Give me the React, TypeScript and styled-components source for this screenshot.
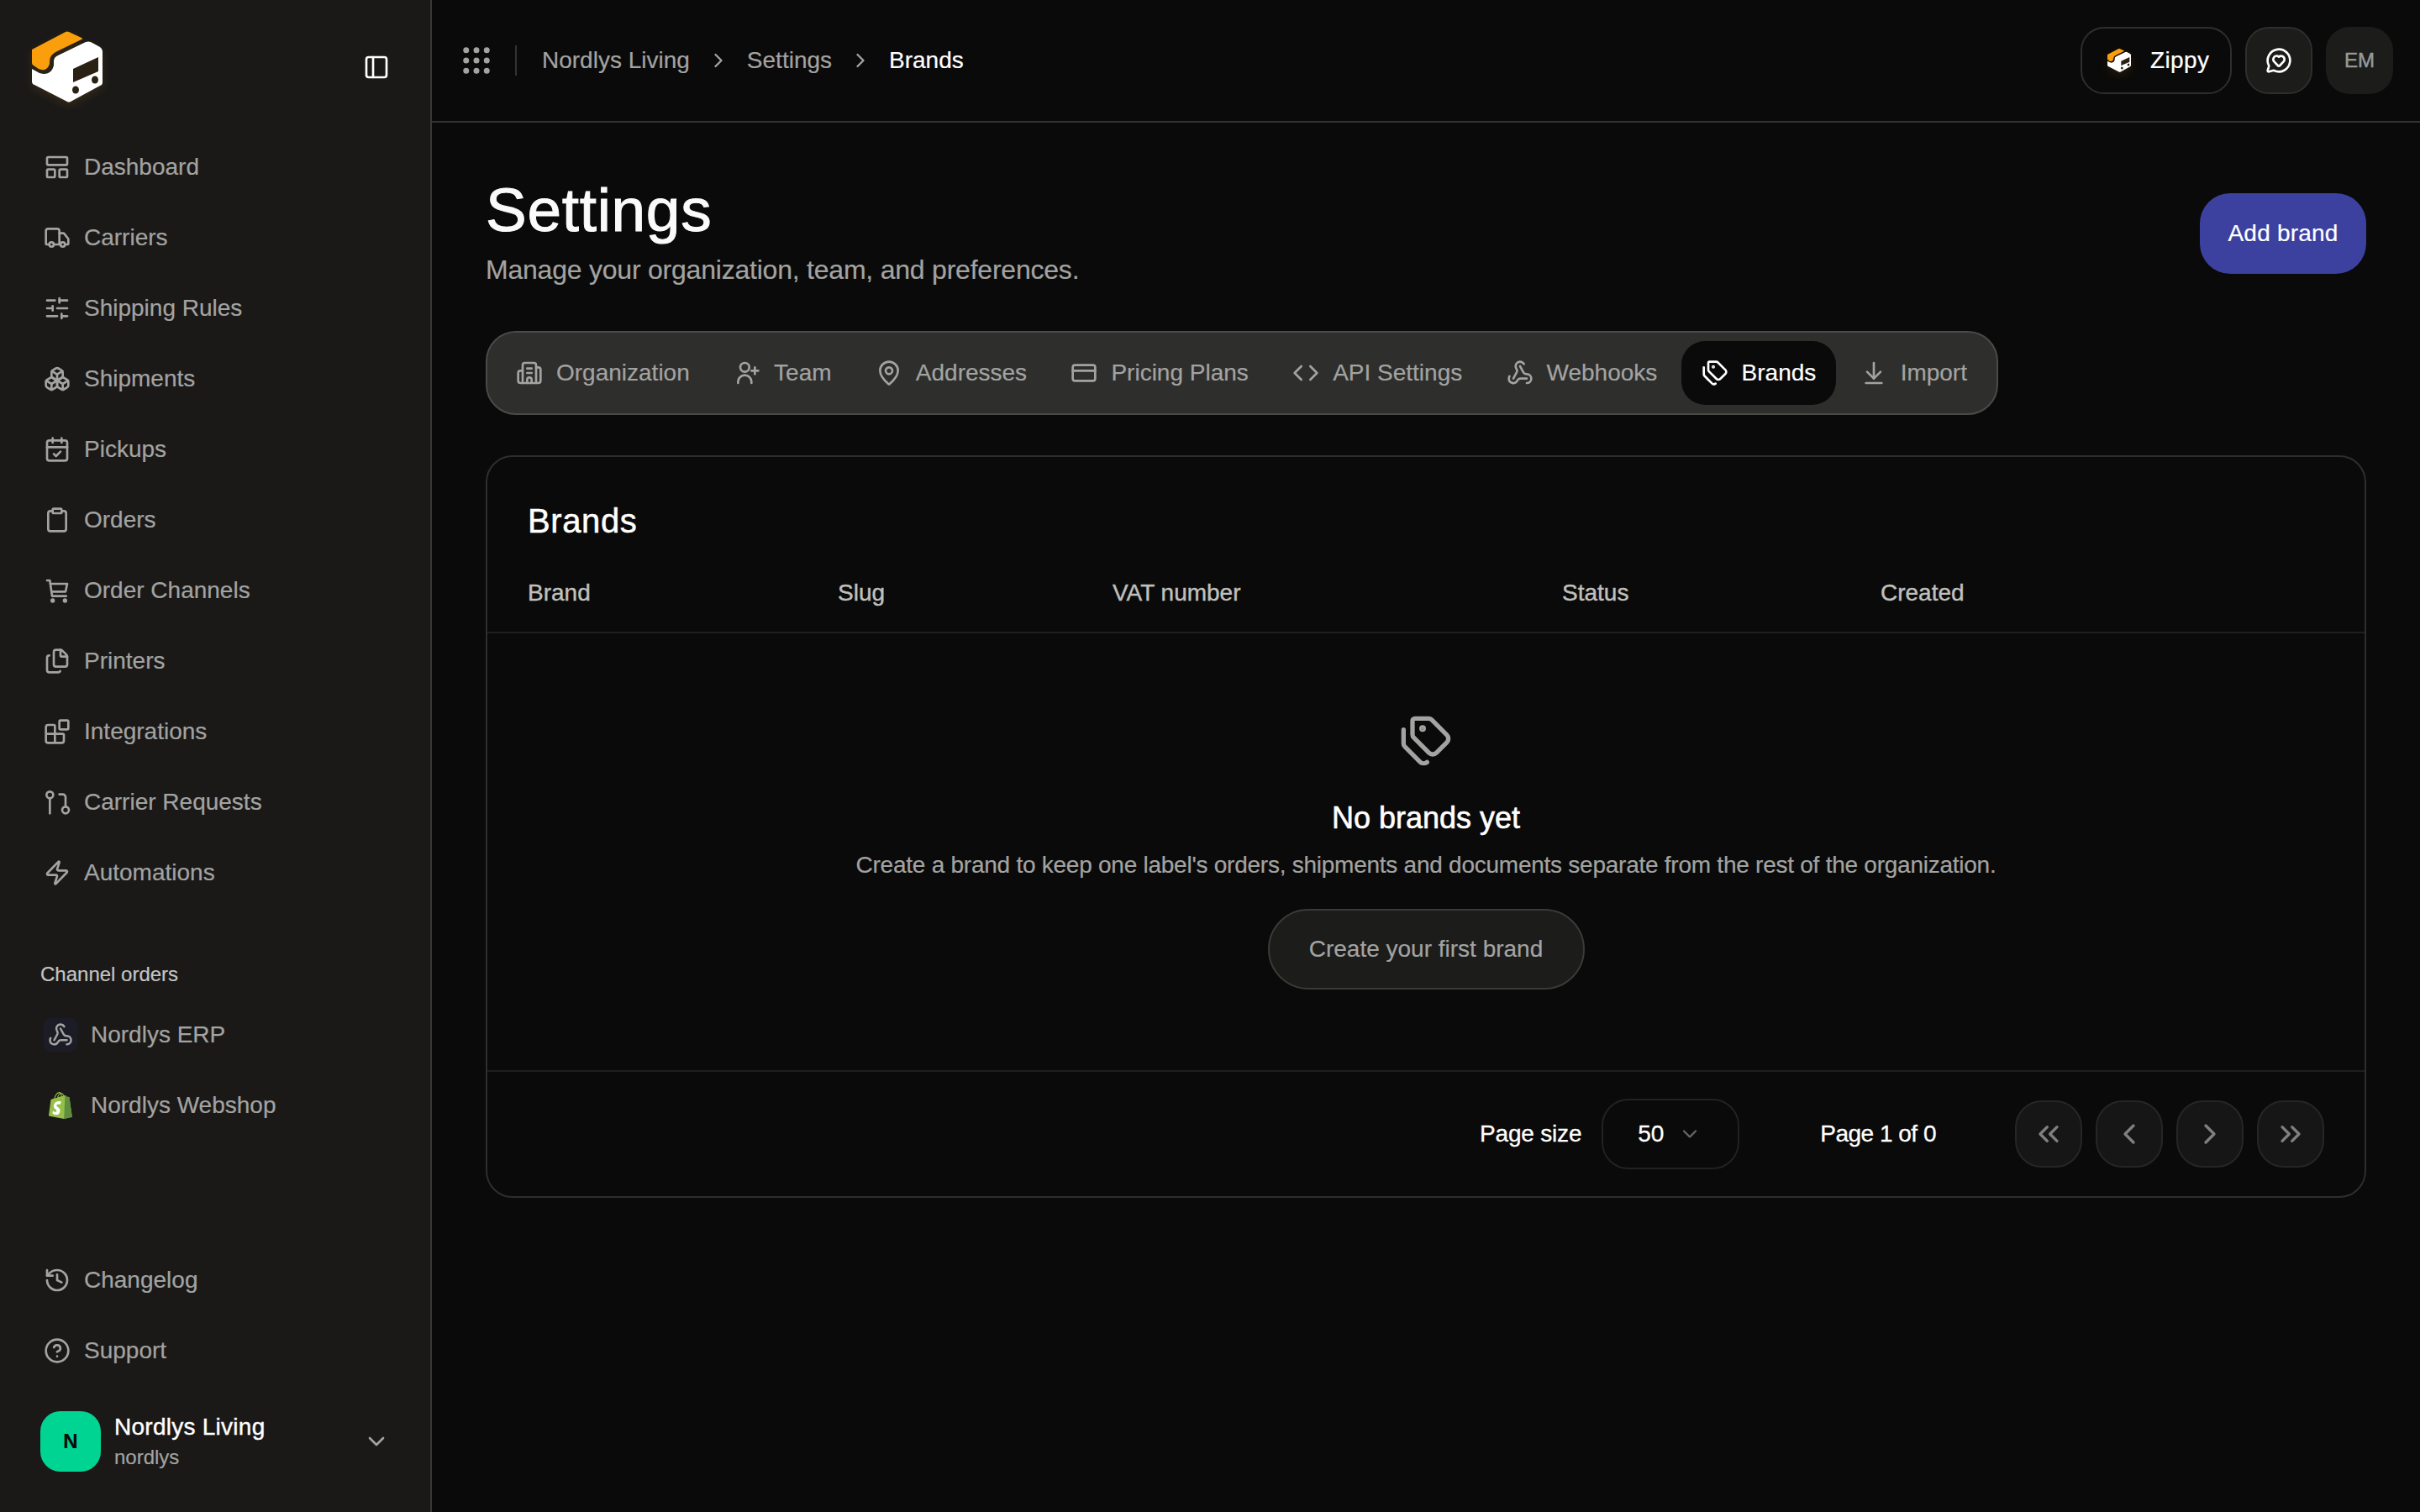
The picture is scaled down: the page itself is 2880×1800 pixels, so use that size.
import React from "react";
import styled, { createGlobalStyle } from "styled-components";
import {
  ArrowDownToLine,
  Blocks,
  Boxes,
  Building2,
  CalendarCheck,
  ChevronDown,
  ChevronLeft,
  ChevronRight,
  ChevronsLeft,
  ChevronsRight,
  CircleHelp,
  Clipboard,
  Code,
  CreditCard,
  Files,
  Grip,
  History,
  LayoutPanelTop,
  MapPin,
  MessageCircleHeart,
  PanelLeft,
  SlidersHorizontal,
  Tags,
  Truck,
  Webhook,
  Zap,
} from "lucide-react";

const GlobalStyle = createGlobalStyle`
  html, body {
    margin: 0;
    background: #0a0a0a;
  }

  * {
    box-sizing: border-box;
  }

  body {
    font-family: "Liberation Sans", Arial, sans-serif;
    font-size: 28px;
    -webkit-text-stroke: 0.2px;
  }
`;

// The three icons the icon package draws differently from the app
const CartIcon: React.FC<{ size: number }> = ({ size }) => (
  <LineIcon width={size} height={size} viewBox="0 0 24 24">
    <path d="M3 3h2.5l2 14h12.5" />
    <path d="M6 6h15l-1.5 7H7" />
    <circle cx="8" cy="21" r="1" />
    <circle cx="19" cy="21" r="1" />
  </LineIcon>
);

const RequestIcon: React.FC<{ size: number }> = ({ size }) => (
  <LineIcon width={size} height={size} viewBox="0 0 24 24">
    <circle cx="5.5" cy="5.5" r="3" />
    <path d="M5.5 8.5V22" />
    <path d="M14 5h3a2.5 2.5 0 0 1 2.5 2.5V16" />
    <circle cx="19.5" cy="19" r="3" />
  </LineIcon>
);

const TeamIcon: React.FC<{ size: number }> = ({ size }) => (
  <LineIcon width={size} height={size} viewBox="0 0 24 24">
    <circle cx="10" cy="7" r="4" />
    <path d="M4 21v-1a6 6 0 0 1 12 0v1" />
    <path d="M19 7v6" />
    <path d="M16 10h6" />
  </LineIcon>
);

const navItems = [
  { label: "Dashboard", icon: LayoutPanelTop },
  { label: "Carriers", icon: Truck },
  { label: "Shipping Rules", icon: SlidersHorizontal },
  { label: "Shipments", icon: Boxes },
  { label: "Pickups", icon: CalendarCheck },
  { label: "Orders", icon: Clipboard },
  { label: "Order Channels", icon: CartIcon },
  { label: "Printers", icon: Files },
  { label: "Integrations", icon: Blocks },
  { label: "Carrier Requests", icon: RequestIcon },
  { label: "Automations", icon: Zap },
];

const tabs = [
  { label: "Organization", icon: Building2 },
  { label: "Team", icon: TeamIcon },
  { label: "Addresses", icon: MapPin },
  { label: "Pricing Plans", icon: CreditCard },
  { label: "API Settings", icon: Code },
  { label: "Webhooks", icon: Webhook },
  { label: "Brands", icon: Tags, active: true },
  { label: "Import", icon: ArrowDownToLine },
];

const columns = ["Brand", "Slug", "VAT number", "Status", "Created"];

const Logo: React.FC<{ size: number }> = ({ size }) => (
  <LogoSvg width={size} height={size} viewBox="0 0 96 96">
    <path
      d="M6 27 L46 6 Q48 5 50 6 L65 13 Q67 14 65 15 L36 29 Q27 33 27 41 L27 44 Q24 54 14 50 L8 46 Q6 45 6 43 Z"
      fill="#fa9f0b"
    />
    <path
      d="M6 50 L15 55 Q29 59 32 46 L32 41 Q32 36 37 34 L70 18 Q73 17 76 18 L87 24 Q90 26 90 29 L90 66 Q90 69 87 70 L52 89 Q50 90 48 89 L9 69 Q6 68 6 65 Z"
      fill="#ffffff"
    />
    <path d="M55 50 L85 36 L85 53 L55 66 Z" fill="#2a2013" />
    <ellipse cx="58" cy="75" rx="4" ry="4.5" fill="#2a2013" />
    <ellipse cx="81" cy="63" rx="4" ry="4.5" fill="#2a2013" />
  </LogoSvg>
);

const ShopifyMark: React.FC = () => (
  <svg width="28" height="32" viewBox="0 0 256 292">
    <path
      d="M223.774 57.34c-.201-1.46-1.48-2.268-2.537-2.357-1.055-.088-23.383-1.743-23.383-1.743s-15.507-15.395-17.209-17.099c-1.703-1.703-5.029-1.185-6.32-.805-.19.056-3.388 1.043-8.678 2.68-5.18-14.906-14.322-28.604-30.405-28.604-.444 0-.901.018-1.358.044C129.31 3.407 123.644.779 118.75.779c-37.465 0-55.364 46.835-60.976 70.635-14.558 4.511-24.9 7.718-26.221 8.133-8.126 2.549-8.383 2.805-9.45 10.462C21.3 95.806.038 260.235.038 260.235l165.678 31.042 89.77-19.42S223.973 58.8 223.775 57.34zM156.49 40.848l-14.019 4.339c.005-.988.01-1.96.01-3.023 0-9.264-1.286-16.723-3.349-22.636 8.287 1.04 13.806 10.469 17.358 21.32zm-27.638-19.483c2.304 5.773 3.802 14.058 3.802 25.238 0 .572-.005 1.095-.01 1.624-9.117 2.824-19.024 5.89-28.953 8.966 5.575-21.516 16.025-31.908 25.161-35.828zm-11.131-10.537c1.617 0 3.246.549 4.805 1.622-12.007 5.65-24.877 19.88-30.312 48.297l-22.886 7.088C75.694 46.16 90.81 10.828 117.72 10.828z"
      fill="#95bf46"
    />
    <path
      d="M221.237 54.983c-1.055-.088-23.383-1.743-23.383-1.743s-15.507-15.395-17.209-17.099c-.637-.634-1.496-.959-2.394-1.099l-12.527 256.233 89.762-19.418S223.972 58.8 223.774 57.34c-.201-1.46-1.48-2.268-2.537-2.357"
      fill="#5e8e3e"
    />
    <path
      d="M135.242 104.585l-11.069 32.926s-9.698-5.176-21.586-5.176c-17.428 0-18.305 10.937-18.305 13.693 0 15.038 39.2 20.8 39.2 55.997 0 27.692-17.564 45.524-41.246 45.524-28.418 0-42.951-17.686-42.951-17.686l7.609-25.14s14.939 12.826 27.545 12.826c8.237 0 11.587-6.485 11.587-11.223 0-19.6-32.16-20.475-32.16-52.681 0-27.106 19.456-53.337 58.73-53.337 15.133 0 22.646 4.277 22.646 4.277"
      fill="#ffffff"
    />
  </svg>
);

const App: React.FC = () => {
  return (
    <Shell>
      <GlobalStyle />
      <Sidebar>
        <SidebarHead>
          <Logo size={96} />
          <CollapseButton>
            <PanelLeft size={32} />
          </CollapseButton>
        </SidebarHead>
        <Nav>
          {navItems.map(({ label, icon: Icon }) => (
            <NavItem key={label}>
              <Icon size={32} />
              {label}
            </NavItem>
          ))}
        </Nav>
        <SectionLabel>Channel orders</SectionLabel>
        <Nav>
          <ChannelItem>
            <ChannelBadge $tinted>
              <Webhook size={30} />
            </ChannelBadge>
            Nordlys ERP
          </ChannelItem>
          <ChannelItem>
            <ChannelBadge>
              <ShopifyMark />
            </ChannelBadge>
            Nordlys Webshop
          </ChannelItem>
        </Nav>
        <SidebarSpacer />
        <Nav>
          <NavItem>
            <History size={32} />
            Changelog
          </NavItem>
          <NavItem>
            <CircleHelp size={32} />
            Support
          </NavItem>
        </Nav>
        <OrgRow>
          <OrgAvatar>N</OrgAvatar>
          <OrgText>
            <OrgName>Nordlys Living</OrgName>
            <OrgSlug>nordlys</OrgSlug>
          </OrgText>
          <ChevronDown size={32} />
        </OrgRow>
      </Sidebar>

      <Main>
        <Topbar>
          <GripIcon size={42} />
          <TopDivider />
          <Crumb>Nordlys Living</Crumb>
          <CrumbArrow size={28} />
          <Crumb>Settings</Crumb>
          <CrumbArrow size={28} />
          <Crumb $current>Brands</Crumb>
          <TopActions>
            <ProductPill>
              <Logo size={32} />
              Zippy
            </ProductPill>
            <SquareButton>
              <MessageCircleHeart size={32} />
            </SquareButton>
            <UserBadge>EM</UserBadge>
          </TopActions>
        </Topbar>

        <Page>
          <PageHead>
            <div>
              <PageTitle>Settings</PageTitle>
              <PageSubtitle>
                Manage your organization, team, and preferences.
              </PageSubtitle>
            </div>
            <PrimaryButton>Add brand</PrimaryButton>
          </PageHead>

          <TabBar>
            {tabs.map(({ label, icon: Icon, active }) => (
              <Tab key={label} $active={active}>
                <Icon size={32} />
                {label}
              </Tab>
            ))}
          </TabBar>

          <Card>
            <CardTitle>Brands</CardTitle>
            <TableHead>
              {columns.map((c) => (
                <span key={c}>{c}</span>
              ))}
            </TableHead>
            <Empty>
              <EmptyIcon size={64} />
              <EmptyTitle>No brands yet</EmptyTitle>
              <EmptyText>
                Create a brand to keep one label's orders, shipments and
                documents separate from the rest of the organization.
              </EmptyText>
              <GhostButton>Create your first brand</GhostButton>
            </Empty>
            <CardFooter>
              <PageSize>
                Page size
                <SizeSelect>
                  50
                  <ChevronDown size={28} />
                </SizeSelect>
              </PageSize>
              <PageCount>Page 1 of 0</PageCount>
              <Pager>
                <PagerButton>
                  <ChevronsLeft size={40} />
                </PagerButton>
                <PagerButton>
                  <ChevronLeft size={40} />
                </PagerButton>
                <PagerButton>
                  <ChevronRight size={40} />
                </PagerButton>
                <PagerButton>
                  <ChevronsRight size={40} />
                </PagerButton>
              </Pager>
            </CardFooter>
          </Card>
        </Page>
      </Main>
    </Shell>
  );
};

export default App;

const LineIcon = styled.svg`
  flex: none;
  fill: none;
  stroke: currentColor;
  stroke-width: 2;
  stroke-linecap: round;
  stroke-linejoin: round;
`;

const Shell = styled.div`
  display: flex;
  height: 100vh;
  min-height: 1800px;
  background: #0a0a0a;
  overflow: hidden;
`;

const Sidebar = styled.aside`
  display: flex;
  flex-direction: column;
  flex: 0 0 514px;
  background: #1a1918;
  border-right: 2px solid #383836;
  padding-bottom: 48px;
  color: #a3a3a1;
`;

const SidebarHead = styled.div`
  display: flex;
  align-items: center;
  justify-content: space-between;
  height: 157px;
  padding: 32px 48px 29px 32px;
`;

const LogoSvg = styled.svg`
  flex: none;
  filter: drop-shadow(0 4px 6px rgba(250, 159, 11, 0.12));
`;

const CollapseButton = styled.div`
  display: flex;
  color: #ffffff;
`;

const Nav = styled.nav`
  display: flex;
  flex-direction: column;
  padding: 0 24px;
`;

const NavItem = styled.div`
  display: flex;
  align-items: center;
  gap: 16px;
  height: 84px;
  padding-left: 28px;
`;

const SectionLabel = styled.div`
  margin: 63px 0 14px;
  padding-left: 48px;
  font-size: 24px;
  line-height: 32px;
  color: #c4c4c2;
`;

const ChannelItem = styled.div`
  display: flex;
  align-items: center;
  gap: 16px;
  height: 84px;
  padding-left: 28px;
`;

const ChannelBadge = styled.div<{ $tinted?: boolean }>`
  display: flex;
  align-items: center;
  justify-content: center;
  width: 40px;
  height: 40px;
  border-radius: 8px;
  background: ${(p) => (p.$tinted ? "#1c1c26" : "transparent")};
`;

const SidebarSpacer = styled.div`
  flex: 1;
`;

const OrgRow = styled.div`
  display: flex;
  align-items: center;
  gap: 16px;
  margin-top: 30px;
  padding: 0 48px 0 48px;
`;

const OrgAvatar = styled.div`
  display: flex;
  align-items: center;
  justify-content: center;
  width: 72px;
  height: 72px;
  border-radius: 24px;
  background: #00d492;
  color: #0a0a0a;
  font-size: 24px;
  font-weight: 700;
`;

const OrgText = styled.div`
  flex: 1;
`;

const OrgName = styled.div`
  color: #ffffff;
  font-size: 28px;
  line-height: 38px;
  letter-spacing: 0.26px;
  -webkit-text-stroke: 0.4px;
`;

const OrgSlug = styled.div`
  font-size: 24px;
  line-height: 34px;
`;

const Main = styled.main`
  display: flex;
  flex-direction: column;
  flex: 1;
  min-width: 0;
`;

const Topbar = styled.header`
  display: flex;
  align-items: center;
  flex: 0 0 146px;
  padding: 0 32px;
  border-bottom: 2px solid #333331;
  color: #a3a3a1;
`;

const GripIcon = styled(Grip)`
  flex: none;
`;

const TopDivider = styled.div`
  width: 2px;
  height: 36px;
  margin: 0 30px 0 25px;
  background: #333331;
`;

const Crumb = styled.span<{ $current?: boolean }>`
  color: ${(p) => (p.$current ? "#ffffff" : "#a3a3a1")};
`;

const CrumbArrow = styled(ChevronRight)`
  margin: 0 20px;
`;

const TopActions = styled.div`
  display: flex;
  gap: 16px;
  margin-left: auto;
`;

const ProductPill = styled.div`
  display: flex;
  align-items: center;
  gap: 21px;
  width: 180px;
  height: 80px;
  padding-left: 28px;
  border: 2px solid #2e2e2c;
  border-radius: 28px;
  color: #ffffff;
  letter-spacing: 0.4px;
`;

const SquareButton = styled.div`
  display: flex;
  align-items: center;
  justify-content: center;
  width: 80px;
  height: 80px;
  border: 2px solid #2e2e2c;
  border-radius: 28px;
  background: #1c1c1b;
  color: #ffffff;
`;

const UserBadge = styled.div`
  display: flex;
  align-items: center;
  justify-content: center;
  width: 80px;
  height: 80px;
  border-radius: 28px;
  background: #1c1c1b;
  color: #999997;
  font-size: 24px;
  -webkit-text-stroke: 0.5px;
`;

const Page = styled.div`
  padding: 64px 64px 0;
`;

const PageHead = styled.div`
  display: flex;
  align-items: center;
  justify-content: space-between;
`;

const PageTitle = styled.h1`
  margin: 0;
  color: #fafafa;
  font-size: 73px;
  font-weight: 400;
  line-height: 80px;
  letter-spacing: 0.7px;
  -webkit-text-stroke: 1px;
`;

const PageSubtitle = styled.p`
  margin: 9px 0 0;
  color: #a3a3a1;
  font-size: 32px;
  line-height: 44px;
  letter-spacing: -0.22px;
`;

const PrimaryButton = styled.div`
  display: flex;
  align-items: center;
  justify-content: center;
  width: 198px;
  height: 96px;
  margin-top: 3px;
  border-radius: 36px;
  background: #3c419f;
  color: #ffffff;
  letter-spacing: 0.2px;
`;

const TabBar = styled.div`
  display: flex;
  gap: 4.3px;
  width: 1800px;
  height: 100px;
  margin-top: 51px;
  padding: 10px;
  border: 2px solid #4a4a48;
  border-radius: 36px;
  background: #2e2e2d;
`;

const Tab = styled.div<{ $active?: boolean }>`
  display: flex;
  align-items: center;
  gap: 16px;
  padding: 0 24px;
  border-radius: 28px;
  background: ${(p) => (p.$active ? "#0a0a0a" : "transparent")};
  color: ${(p) => (p.$active ? "#ffffff" : "#a3a3a1")};
`;

const Card = styled.section`
  margin-top: 48px;
  border: 2px solid #2e2e2c;
  border-radius: 32px;
`;

const CardTitle = styled.h2`
  margin: 0;
  padding: 48px 48px 12px;
  color: #ffffff;
  font-size: 40px;
  font-weight: 400;
  line-height: 56px;
  letter-spacing: 0.6px;
  -webkit-text-stroke: 0.5px;
`;

const TableHead = styled.div`
  display: grid;
  grid-template-columns: 369px 327px 535px 379px 1fr;
  align-items: center;
  height: 94px;
  padding: 0 48px;
  border-bottom: 2px solid #1f1f1e;
  color: #c0c0be;
  -webkit-text-stroke: 0.4px;
`;

const Empty = styled.div`
  display: flex;
  flex-direction: column;
  align-items: center;
  padding: 96px 0;
  border-bottom: 2px solid #1f1f1e;
`;

const EmptyIcon = styled(Tags)`
  color: #a3a3a1;
`;

const EmptyTitle = styled.div`
  margin-top: 32px;
  color: #ffffff;
  font-size: 36px;
  line-height: 56px;
  -webkit-text-stroke: 0.6px;
`;

const EmptyText = styled.div`
  margin-top: 8px;
  color: #a3a3a1;
  line-height: 40px;
  letter-spacing: -0.25px;
`;

const GhostButton = styled.div`
  display: flex;
  align-items: center;
  justify-content: center;
  width: 377px;
  height: 96px;
  margin-top: 32px;
  border: 2px solid #3a3a38;
  border-radius: 48px;
  background: #1c1c1b;
  color: #a3a3a1;
`;

const CardFooter = styled.div`
  display: flex;
  align-items: center;
  justify-content: flex-end;
  gap: 96px;
  height: 148px;
  padding: 0 48px;
  color: #ffffff;
  -webkit-text-stroke: 0.3px;
`;

const PageSize = styled.div`
  display: flex;
  align-items: center;
  gap: 24px;
  letter-spacing: -0.2px;
`;

const PageCount = styled.span`
  margin-right: -2px;
  letter-spacing: -0.5px;
`;

const SizeSelect = styled.div`
  display: flex;
  align-items: center;
  gap: 17px;
  width: 164px;
  height: 84px;
  padding-left: 41px;
  border: 2px solid #222221;
  border-radius: 32px;
  letter-spacing: 0;

  svg {
    color: #666664;
  }
`;

const Pager = styled.div`
  display: flex;
  gap: 16px;
`;

const PagerButton = styled.div`
  display: flex;
  align-items: center;
  justify-content: center;
  width: 80px;
  height: 80px;
  border: 2px solid #262625;
  border-radius: 32px;
  background: #161616;
  color: #80807e;
`;
